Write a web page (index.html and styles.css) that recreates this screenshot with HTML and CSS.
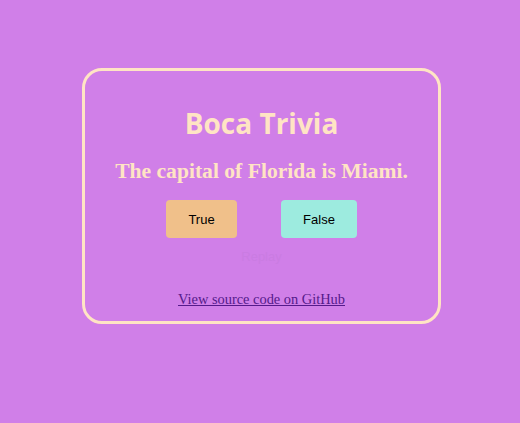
FILE: index.html
```html
<!DOCTYPE html>
<html>
<head>
<meta charset="utf-8">
<link rel="stylesheet" href="styles.css">
</head>
<body>
<div class="card">
  <h1 class="title">Boca Trivia</h1>
  <h2 class="question">The capital of Florida is Miami.</h2>
  <div class="answers">
    <button class="btn btn-true">True</button>
    <button class="btn btn-false">False</button>
  </div>
  <div class="replay">Replay</div>
  <a class="source" href="#">View source code on GitHub</a>
</div>
</body>
</html>
```
FILE: styles.css
```css
html, body {
  margin: 0;
  padding: 0;
}
body {
  background: #d07fe8;
  height: 423px;
  overflow: hidden;
}
.card {
  box-sizing: border-box;
  width: 359px;
  height: 256px;
  margin: 68px 0 0 82px;
  border: 3px solid #ffe4c4;
  border-radius: 20px;
  display: flex;
  flex-direction: column;
  align-items: center;
  padding-top: 36px;
}
.title {
  margin: 0;
  font-family: "Open Sans", sans-serif;
  font-weight: 700;
  font-size: 28px;
  line-height: 32px;
  color: #ffe4c4;
}
.question {
  margin: 19px 0 0;
  font-family: "Liberation Serif", serif;
  font-weight: 700;
  font-size: 21.6px;
  line-height: 26px;
  color: #ffe4c4;
}
.answers {
  display: flex;
  gap: 44px;
  margin-top: 16px;
}
.btn {
  border: none;
  border-radius: 4px;
  height: 38px;
  padding: 0 22px;
  font-family: "Liberation Sans", sans-serif;
  font-size: 13px;
  color: #000;
}
.btn-true { background: #f0c08a; width: 71px; }
.btn-false { background: #9debdf; width: 76px; }
.replay {
  margin-top: 11px;
  font-family: "Liberation Sans", sans-serif;
  font-size: 13px;
  line-height: 16px;
  color: #ca7ce2;
}
.source {
  margin-top: 26px;
  font-family: "Liberation Serif", serif;
  font-size: 14.4px;
  color: #551a8b;
}
```
